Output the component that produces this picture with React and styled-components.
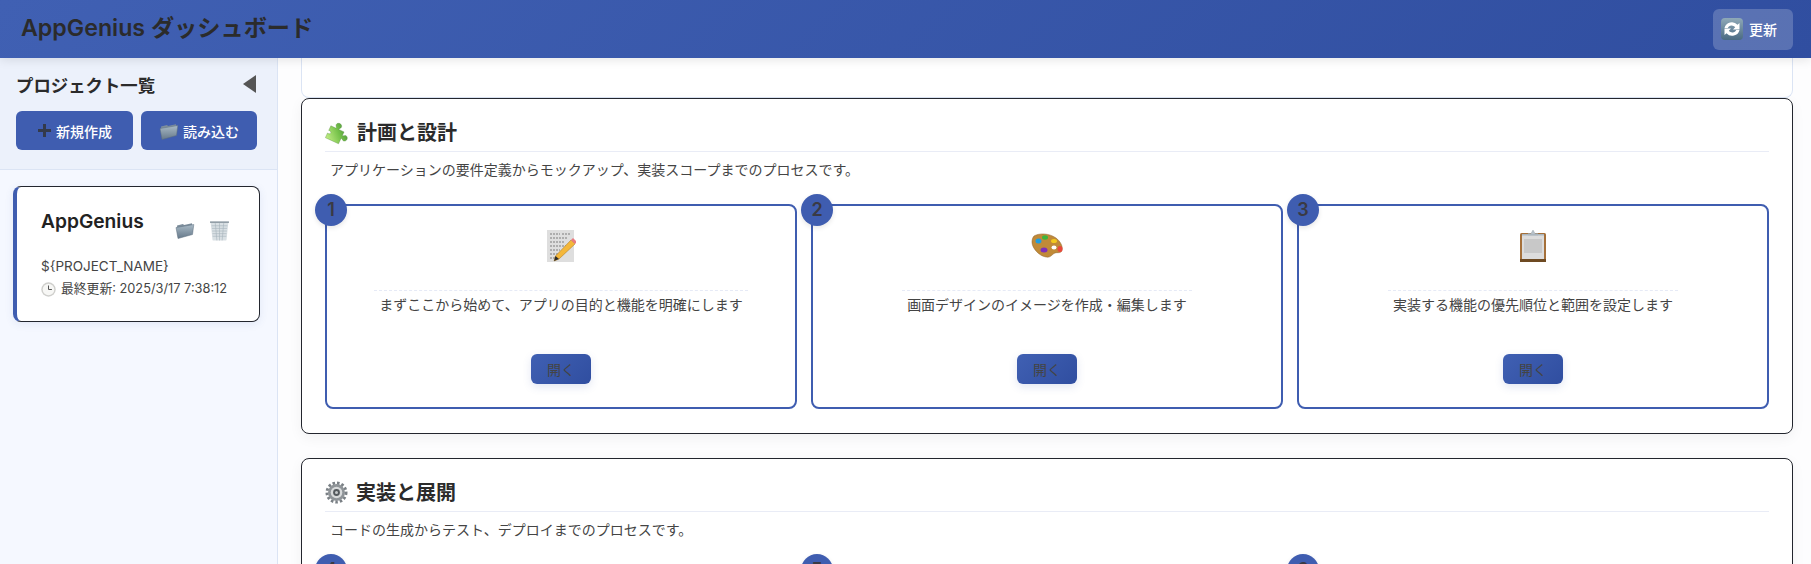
import styled, {createGlobalStyle} from "styled-components";

const primary = "#3f5db0";
const font = `Inter, "Noto Sans CJK JP", sans-serif`;

const GlobalStyle = createGlobalStyle`
  * { box-sizing: border-box; }
  html, body { margin: 0; height: 100%; overflow: hidden; }
  body { font-family: ${font}; color: #333; background: #fff; }
  svg { flex: none; }
`;

const Page = styled.div`
  height: 100vh;
  display: flex;
  flex-direction: column;
  overflow: hidden;
`;

const Header = styled.header`
  height: 58px;
  flex: none;
  display: flex;
  align-items: center;
  justify-content: space-between;
  padding: 0 18px 0 21px;
  background: linear-gradient(135deg, #4060b3, #304ea0);
  box-shadow: 0 2px 10px rgba(0, 0, 0, .1);
  position: relative;
  z-index: 2;
`;

const AppTitle = styled.h1`
  margin: 0 0 2px;
  font-size: 23.2px;
  line-height: 30px;
  font-weight: 600;
  color: #2b2b2b;
`;

const RefreshButton = styled.button`
  width: 80px;
  height: 41px;
  display: flex;
  align-items: center;
  gap: 6px;
  padding: 0 8px;
  border: 0;
  border-radius: 6px;
  background: rgba(255, 255, 255, .2);
  color: #fff;
  font: 500 14px ${font};
`;

const Body = styled.div`
  flex: 1;
  display: flex;
  min-height: 0;
`;

const Sidebar = styled.aside`
  width: 278px;
  flex: none;
  background: #f5f8ff;
  border-right: 1px solid #dbe4f4;
`;

const SidebarTop = styled.div`
  height: 112px;
  padding: 16px 20px 0 16px;
  background: #ecf1fb;
  border-bottom: 1px solid #dbe4f4;
`;

const SidebarTitleRow = styled.div`
  display: flex;
  align-items: center;
  justify-content: space-between;
  height: 20px;
  margin-bottom: 17px;
`;

const SidebarTitle = styled.h2`
  margin: 0;
  font-size: 17.4px;
  font-weight: 700;
  color: #2b2b2b;
`;

const Collapse = styled.span`
  width: 0;
  height: 0;
  margin-right: 1px;
  border-style: solid;
  border-width: 9px 13px 9px 0;
  border-color: transparent #555 transparent transparent;
`;

const SidebarActions = styled.div`
  display: grid;
  grid-template-columns: 117px 116px;
  gap: 8px;
`;

const SidebarButton = styled.button`
  height: 39px;
  display: flex;
  align-items: center;
  justify-content: center;
  gap: 4px;
  border: 0;
  border-radius: 6px;
  background: ${primary};
  color: #fff;
  font: 500 14px ${font};
`;

const ProjectList = styled.div`
  padding: 16px 17px 0 13px;
`;

const ProjectCard = styled.div`
  height: 136px;
  padding: 22px 29px 0 24px;
  background: #fff;
  border: 1px solid #23262e;
  border-left: 4px solid ${primary};
  border-radius: 8px;
  box-shadow: 0 2px 8px rgba(60, 90, 170, .1);
`;

const ProjectHead = styled.div`
  display: flex;
  justify-content: space-between;
  height: 48px;
`;

const ProjectName = styled.h3`
  margin: 0;
  font-size: 19.2px;
  line-height: 24px;
  font-weight: 600;
  color: #222;
`;

const ProjectIcons = styled.div`
  display: flex;
  gap: 14px;
  padding-top: 11px;
`;

const ProjectPath = styled.div`
  font-size: 13.5px;
  line-height: 18px;
  color: #444;
`;

const ProjectDate = styled.div`
  display: flex;
  align-items: center;
  gap: 5px;
  margin-top: 5px;
  font-size: 12.8px;
  line-height: 18px;
  color: #444;
`;

const Main = styled.main`
  flex: 1;
  min-width: 0;
  padding: 0 18px 0 23px;
  overflow: hidden;
  background: #fdfdfe;
`;

const ClippedCard = styled.div`
  height: 40px;
  background: #fff;
  border: 1px solid #dbe4f4;
  border-top: 0;
  border-radius: 0 0 8px 8px;
`;

const Section = styled.section`
  margin-bottom: 24px;
  padding: 22px 23px 24px;
  background: #fff;
  border: 1px solid #23262e;
  border-radius: 8px;
  box-shadow: 0 4px 14px rgba(0, 0, 0, .05);
`;

const SectionTitle = styled.h2`
  display: flex;
  align-items: center;
  gap: 8px;
  height: 31px;
  margin: 0;
  padding-bottom: 7px;
  border-bottom: 1px solid #e9ecf6;
  font-size: 20px;
  line-height: 20px;
  font-weight: 700;
  color: #2b2b2b;
`;

const SectionText = styled.p`
  margin: 8px 0 0;
  padding-left: 5px;
  font-size: 14px;
  line-height: 20px;
  color: #444;
`;

const Steps = styled.div`
  display: grid;
  grid-template-columns: repeat(3, 1fr);
  gap: 14px;
  margin-top: 24px;
`;

const Step = styled.div`
  position: relative;
  height: 205px;
  display: flex;
  flex-direction: column;
  align-items: center;
  padding: 24px 0 23px;
  border: 2px solid ${primary};
  border-radius: 8px;
  background: #fff;
`;

const Badge = styled.span`
  position: absolute;
  top: -12px;
  left: -12px;
  width: 32px;
  height: 32px;
  display: flex;
  align-items: center;
  justify-content: center;
  padding-bottom: 1px;
  border-radius: 50%;
  background: ${primary};
  box-shadow: 0 2px 5px rgba(0, 0, 0, .1);
  font-size: 18px;
  font-weight: 600;
  color: #3a3a44;
`;

const StepIcon = styled.div`
  height: 32px;
  display: flex;
  align-items: center;
  margin-bottom: 28px;
`;

const StepText = styled.div`
  padding: 4px 5px 0;
  border-top: 1px dashed #e6eaf6;
  font-size: 14px;
  line-height: 20px;
  color: #444;
`;

const OpenButton = styled.button`
  width: 60px;
  height: 30px;
  margin-top: auto;
  border: 0;
  border-radius: 6px;
  background: linear-gradient(135deg, #4060b3, #304ea0);
  box-shadow: 0 3px 8px rgba(60, 90, 170, .15);
  color: #444;
  font: 400 14px ${font};
`;

const Plus = () => (
  <svg width="15" height="15" viewBox="0 0 15 15">
    <path d="M6 1h3v5h5v3H9v5H6V9H1V6h5z" fill="#333a4a" />
  </svg>
);

const FolderIcon = ({size = 20}) => (
  <svg width={size} height={size} viewBox="0 0 20 20">
    <defs>
      <linearGradient id="folderFront" x1="0" y1="0" x2="0" y2="1">
        <stop offset="0" stopColor="#a9bac6" />
        <stop offset="1" stopColor="#66798a" />
      </linearGradient>
    </defs>
    <path d="M2 5.500 8 4l1 1 8-1.800.6 9-14.600 5z" fill="#7d8e9c" />
    <path d="M1 7.500 18.800 4.500 17.500 14.500 3 18.500z" fill="url(#folderFront)" stroke="#5c6e7e" strokeWidth=".5" />
  </svg>
);

const TrashIcon = () => (
  <svg width="21" height="21" viewBox="0 0 20 20">
    <path d="M1.500 2h17l-1.800 16.800a1 1 0 0 1-1 .8H4.300a1 1 0 0 1-1-.8z" fill="#d9e0e4" />
    <path d="M2.500 5.500h15M2.800 8h14.400M3 10.500h14M3.300 13h13.400M3.500 15.500h13M6 3l1.500 16.500M10 3v16.500M14 3l-1.500 16.500" stroke="#a9b5bd" strokeWidth=".6" />
    <path d="M1 1.300h18v1.500H1z" fill="#8d9aa3" />
  </svg>
);

const ClockIcon = () => (
  <svg width="15" height="15" viewBox="0 0 15 15">
    <circle cx="7.500" cy="7.500" r="7.200" fill="#cfcfcc" />
    <circle cx="7.500" cy="7.500" r="5.800" fill="#f7f7f5" />
    <path d="M7.500 3.500v4h3.400" fill="none" stroke="#555" strokeWidth="1" />
  </svg>
);

const RefreshIcon = () => (
  <svg width="22" height="22" viewBox="0 0 22 22">
    <defs>
      <linearGradient id="refreshBg" x1="0" y1="0" x2="0" y2="1">
        <stop offset="0" stopColor="#8fa9b8" />
        <stop offset="1" stopColor="#4a6a82" />
      </linearGradient>
    </defs>
    <rect width="22" height="22" rx="4" fill="url(#refreshBg)" />
    <path d="M3.500 10a7.500 7.500 0 0 1 13-3.200l2-1.800v6.500H12l2.200-2.200a4.300 4.300 0 0 0-7.400 .7z" fill="#fff" />
    <path d="M18.500 12a7.500 7.500 0 0 1-13 3.200l-2 1.800v-6.500H10l-2.200 2.200a4.300 4.300 0 0 0 7.400-.7z" fill="#fff" />
  </svg>
);

const PuzzleIcon = () => (
  <svg width="24" height="24" viewBox="-1 -2 33 33">
    <defs>
      <linearGradient id="puzzleFill" x1="0" y1="1" x2="1" y2="0">
        <stop offset="0" stopColor="#c4ef86" />
        <stop offset=".5" stopColor="#76c24a" />
        <stop offset="1" stopColor="#3a8434" />
      </linearGradient>
    </defs>
    <g transform="rotate(25 15 16)">
      <path
        d="M3 9H11C11.500 7.500 9 6.500 9 4.500 9 2.500 11 1 13 1S17 2.500 17 4.500C17 6.500 14.500 7.500 15 9H23V14.500C24.500 15 25.500 12.500 27.500 12.500 29.500 12.500 31 14.500 31 16.500S29.500 20.500 27.500 20.500C25.500 20.500 24.500 18 23 18.500V27H3V20C5 20.500 7 20 7 18S5 15.500 3 16z"
        fill="url(#puzzleFill)"
        stroke="#4f7f3a"
        strokeWidth=".4"
      />
    </g>
  </svg>
);

const GearIcon = () => (
  <svg width="23" height="23" viewBox="0 0 23 23">
    <circle cx="11.500" cy="11.500" r="9.500" fill="none" stroke="#7a8085" strokeWidth="3" strokeDasharray="2.500 2" />
    <circle cx="11.500" cy="11.500" r="8.500" fill="#8f9498" />
    <circle cx="11.500" cy="11.500" r="5.800" fill="#d8dadb" />
    <circle cx="11.500" cy="11.500" r="3.400" fill="#54595d" />
    <circle cx="11.500" cy="11.500" r="1.500" fill="#c5c8ca" />
  </svg>
);

const NoteIcon = () => (
  <svg width="30" height="32" viewBox="0 0 30 32">
    <rect x="1" y="0" width="27" height="32" fill="#dedede" />
    <path d="M4 4h10M16 4h8M4 8h18M4 12h14M4 16h16M4 20h10M4 24h8M4 28h6" stroke="#555" strokeWidth=".7" strokeDasharray="2 1" />
    <path d="M25 10 29 14 13 29 8 31 9.500 26z" fill="#f4b73a" stroke="#a8741a" strokeWidth=".5" />
    <path d="M25 10 27 8 31 12 29 14z" fill="#ea7b80" />
    <path d="M8 31 9.500 26 13 29z" fill="#2a2a2a" />
  </svg>
);

const PaletteIcon = () => (
  <svg width="32" height="26" viewBox="0 0 32 26">
    <path d="M3 3C8 0 18 0 25 5c4 3 7 8 6 12-1 4-4 2-7 3-3 1-4 5-9 4C8 23 1 15 1 9c0-2 .6-4.500 2-6z" fill="#c08a38" stroke="#8a5a20" strokeWidth=".5" />
    <ellipse cx="7.500" cy="8" rx="3" ry="2.500" fill="#1f9de0" />
    <ellipse cx="14" cy="4.500" rx="3" ry="2.200" fill="#3cb53c" />
    <ellipse cx="23" cy="8" rx="3" ry="2" fill="#f2c81e" />
    <ellipse cx="29" cy="16" rx="2.500" ry="3" fill="#e8483c" />
    <ellipse cx="13" cy="17" rx="3.500" ry="2.500" fill="#7d30b8" />
    <ellipse cx="23" cy="14.500" rx="2.500" ry="2" fill="#fff" />
  </svg>
);

const ClipboardIcon = () => (
  <svg width="28" height="32" viewBox="0 0 28 32">
    <rect x="1" y="3" width="26" height="29" rx="1.500" fill="#a5703a" />
    <rect x="1" y="29" width="26" height="3" fill="#6e4a22" />
    <rect x="3" y="5" width="22" height="24" fill="#dcdcdc" />
    <path d="M5 10h18M5 12h18M5 14h18M5 16h18M5 18h18M5 20h18M5 22h18" stroke="#b4b4b4" strokeWidth="1" />
    <path d="M9 5V3.500h3L14 0l2 3.500h3V5z" fill="#b7c2ca" stroke="#8d99a3" strokeWidth=".4" />
    <rect x="3" y="4" width="22" height="1.500" fill="#aab6bf" />
  </svg>
);

const sections = [
  {
    title: "計画と設計",
    icon: <PuzzleIcon />,
    text: "アプリケーションの要件定義からモックアップ、実装スコープまでのプロセスです。",
    steps: [
      {no: 1, icon: <NoteIcon />, text: "まずここから始めて、アプリの目的と機能を明確にします"},
      {no: 2, icon: <PaletteIcon />, text: "画面デザインのイメージを作成・編集します"},
      {no: 3, icon: <ClipboardIcon />, text: "実装する機能の優先順位と範囲を設定します"},
    ],
  },
  {
    title: "実装と展開",
    icon: <GearIcon />,
    text: "コードの生成からテスト、デプロイまでのプロセスです。",
    steps: [
      {no: 4, icon: <NoteIcon />, text: "コードを生成します"},
      {no: 5, icon: <ClipboardIcon />, text: "テストを実行します"},
      {no: 6, icon: <GearIcon />, text: "アプリをデプロイします"},
    ],
  },
];

export default function App() {
  return (
    <Page>
      <GlobalStyle />
      <Header>
        <AppTitle>AppGenius ダッシュボード</AppTitle>
        <RefreshButton><RefreshIcon /> 更新</RefreshButton>
      </Header>
      <Body>
        <Sidebar>
          <SidebarTop>
            <SidebarTitleRow>
              <SidebarTitle>プロジェクト一覧</SidebarTitle>
              <Collapse />
            </SidebarTitleRow>
            <SidebarActions>
              <SidebarButton><Plus /> 新規作成</SidebarButton>
              <SidebarButton><FolderIcon /> 読み込む</SidebarButton>
            </SidebarActions>
          </SidebarTop>
          <ProjectList>
            <ProjectCard>
              <ProjectHead>
                <ProjectName>AppGenius</ProjectName>
                <ProjectIcons>
                  <FolderIcon />
                  <TrashIcon />
                </ProjectIcons>
              </ProjectHead>
              <ProjectPath>{"${PROJECT_NAME}"}</ProjectPath>
              <ProjectDate><ClockIcon /> 最終更新: 2025/3/17 7:38:12</ProjectDate>
            </ProjectCard>
          </ProjectList>
        </Sidebar>
        <Main>
          <ClippedCard />
          {sections.map(section => (
            <Section key={section.title}>
              <SectionTitle>{section.icon}{section.title}</SectionTitle>
              <SectionText>{section.text}</SectionText>
              <Steps>
                {section.steps.map(step => (
                  <Step key={step.no}>
                    <Badge>{step.no}</Badge>
                    <StepIcon>{step.icon}</StepIcon>
                    <StepText>{step.text}</StepText>
                    <OpenButton>開く</OpenButton>
                  </Step>
                ))}
              </Steps>
            </Section>
          ))}
        </Main>
      </Body>
    </Page>
  );
}
